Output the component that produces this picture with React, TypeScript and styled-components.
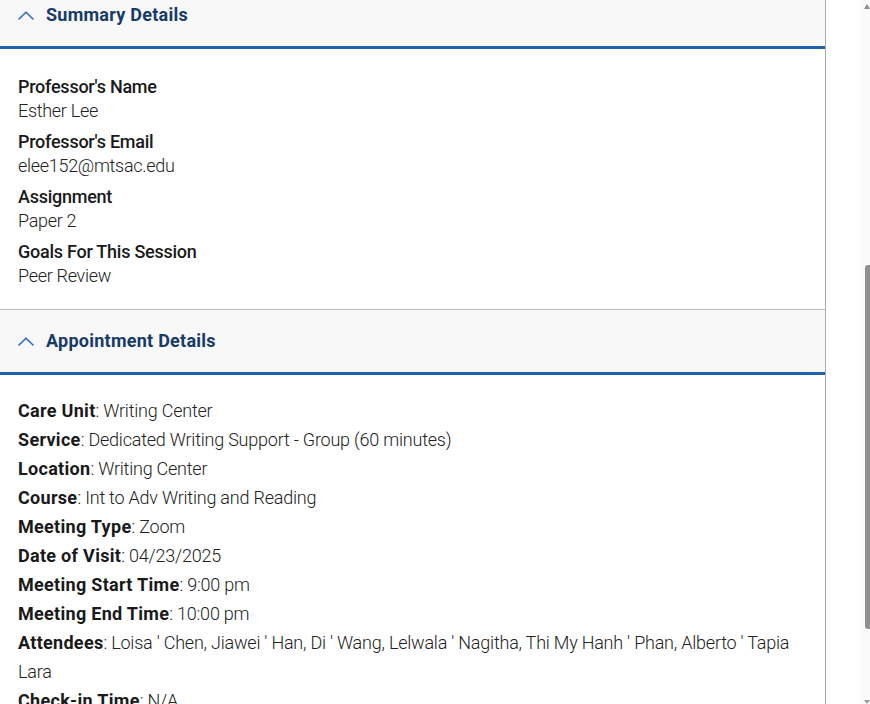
import React from "react";
import styled, { createGlobalStyle } from "styled-components";

const Global = createGlobalStyle`
  html, body { margin: 0; padding: 0; background: #fff; overflow: hidden; }
  body { font-family: Roboto, "Noto Sans", sans-serif; color: #1d1d1d; }
`;

const Page = styled.div`
  display: flex;
  width: 870px;
  height: 704px;
  overflow: hidden;
`;

const Panel = styled.div`
  width: 825px;
  flex: none;
  border-right: 1px solid #a9a9a9;
  display: flex;
  flex-direction: column;
`;

const ScrollOffset = styled.div`
  margin-top: -17px;
  display: flex;
  flex-direction: column;
`;

const Gutter = styled.div`
  flex: 1;
`;

const Track = styled.div`
  width: 9px;
  flex: none;
  background: #fafafa;
  display: flex;
  flex-direction: column;
  align-items: flex-end;
`;

const Arrow = styled.div<{ $down?: boolean }>`
  width: 0;
  height: 0;
  margin-top: ${(p) => (p.$down ? "auto" : "4px")};
  border-left: 3px solid transparent;
  border-right: 3px solid transparent;
  ${(p) =>
    p.$down
      ? "border-top: 4px solid #9a9a9a;"
      : "border-bottom: 5px solid #8e8e8e;"}
`;

const Thumb = styled.div`
  width: 5px;
  height: 364px;
  margin-top: 256px;
  background: #8f8f8f;
  border-radius: 3px 0 0 3px;
`;

const Header = styled.div`
  height: 62px;
  display: flex;
  align-items: center;
  gap: 12px;
  padding-left: 18px;
  background: #f8f8f8;
  border-top: 1px solid #bdbdbd;
  border-bottom: 3px solid #1f63b0;
`;

const Title = styled.h2`
  margin: 0 0 2px;
  font-size: 18px;
  font-weight: 700;
  color: #173b69;
  letter-spacing: 0.25px;
`;

const Chevron = () => (
  <svg width="16" height="9" viewBox="0 0 16 9" fill="none">
    <path d="M1 8 L8 1.2 L15 8" stroke="#2e6db6" strokeWidth="1.6" strokeLinecap="round" strokeLinejoin="round" />
  </svg>
);

const SummaryBody = styled.div`
  padding: 26px 18px 14px;
  display: flex;
  flex-direction: column;
`;

const Item = styled.div`
  display: flex;
  flex-direction: column;
  margin-bottom: 7px;
`;

const Label = styled.div`
  font-size: 18px;
  line-height: 24px;
  font-weight: 500;
  letter-spacing: -0.25px;
  color: #1a1a1a;
`;

const Value = styled.div`
  font-size: 18px;
  line-height: 24px;
  font-weight: 300;
  letter-spacing: -0.3px;
  color: #222;
`;

const DetailBody = styled.div`
  padding: 21px 18px 0;
  display: flex;
  flex-direction: column;
`;

const Line = styled.div`
  font-size: 18px;
  line-height: 29px;
  font-weight: 300;
  letter-spacing: -0.22px;
  color: #222;
  b {
    font-weight: 700;
    letter-spacing: 0.3px;
    color: #1a1a1a;
  }
`;

const summary = [
  ["Professor's Name", "Esther Lee"],
  ["Professor's Email", "elee152@mtsac.edu"],
  ["Assignment", "Paper 2"],
  ["Goals For This Session", "Peer Review"],
];

const details = [
  ["Care Unit", "Writing Center"],
  ["Service", "Dedicated Writing Support - Group (60 minutes)"],
  ["Location", "Writing Center"],
  ["Course", "Int to Adv Writing and Reading"],
  ["Meeting Type", "Zoom"],
  ["Date of Visit", "04/23/2025"],
  ["Meeting Start Time", "9:00 pm"],
  ["Meeting End Time", "10:00 pm"],
  [
    "Attendees",
    "Loisa ' Chen, Jiawei ' Han, Di ' Wang, Lelwala ' Nagitha, Thi My Hanh ' Phan, Alberto ' Tapia Lara",
  ],
  ["Check-in Time", "N/A"],
  ["Check-out Time", "N/A"],
];

export default function App() {
  return (
    <>
      <Global />
      <Page>
        <Panel>
          <ScrollOffset>
            <Header>
              <Chevron />
              <Title>Summary Details</Title>
            </Header>
            <SummaryBody>
              {summary.map(([l, v]) => (
                <Item key={l}>
                  <Label>{l}</Label>
                  <Value>{v}</Value>
                </Item>
              ))}
            </SummaryBody>
            <Header>
              <Chevron />
              <Title>Appointment Details</Title>
            </Header>
            <DetailBody>
              {details.map(([l, v]) => (
                <Line key={l}>
                  <b>{l}</b>: {v}
                </Line>
              ))}
            </DetailBody>
          </ScrollOffset>
        </Panel>
        <Gutter />
        <Track>
          <Arrow />
          <Thumb />
          <Arrow $down />
        </Track>
      </Page>
    </>
  );
}
